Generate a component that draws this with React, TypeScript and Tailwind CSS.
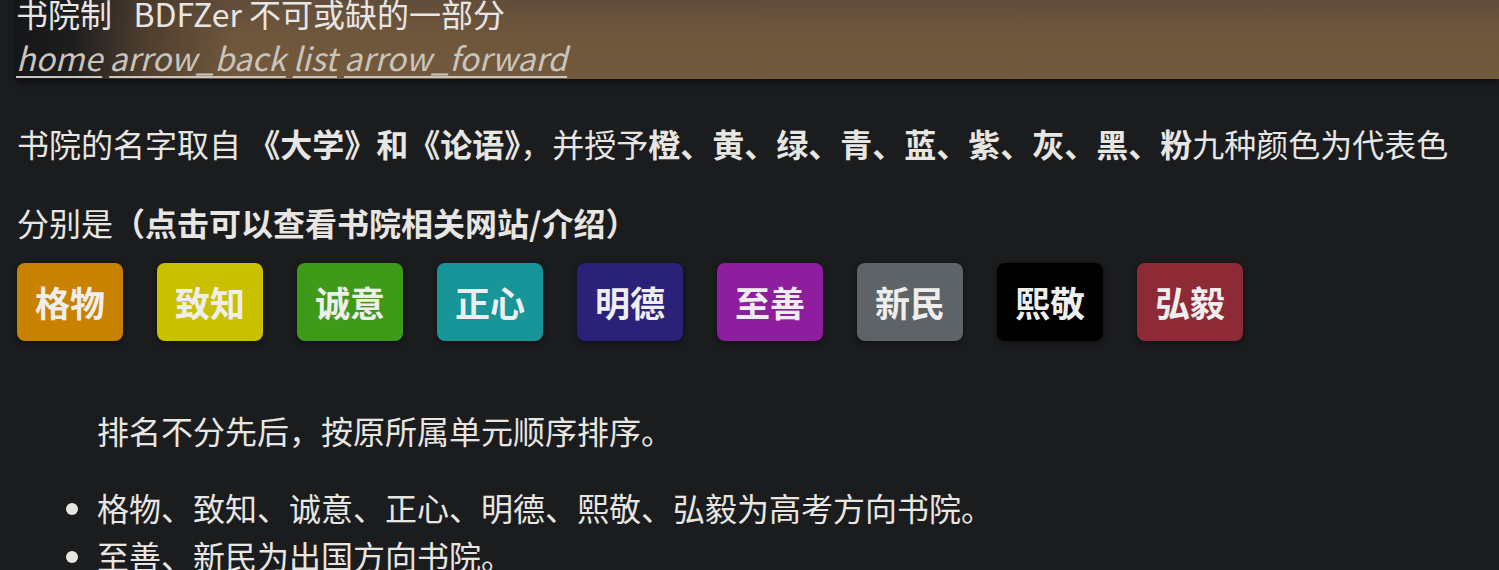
import type { ReactNode } from 'react';

// ---------------------------------------------------------------------------
// Data
// ---------------------------------------------------------------------------
const COLLEGES: { name: string; cls: string }[] = [
  { name: '格物', cls: 'bg-[#c98200]' },
  { name: '致知', cls: 'bg-[#c9c000]' },
  { name: '诚意', cls: 'bg-[#3f9a1a]' },
  { name: '正心', cls: 'bg-[#189598]' },
  { name: '明德', cls: 'bg-[#2a2279]' },
  { name: '至善', cls: 'bg-[#8e1e9e]' },
  { name: '新民', cls: 'bg-[#5d6366]' },
  { name: '熙敬', cls: 'bg-[#000000]' },
  { name: '弘毅', cls: 'bg-[#8e2a36]' },
];

const NAV_LINKS = ['home', 'arrow_back', 'list', 'arrow_forward'];

// ---------------------------------------------------------------------------
// Pieces
// ---------------------------------------------------------------------------
function Bold({ children }: { children: ReactNode }) {
  return <strong className="font-bold">{children}</strong>;
}

function Header() {
  return (
    <header className="relative ml-4 -mt-[9px] h-[88px] overflow-hidden shadow-[0_3px_6px_rgba(0,0,0,0.55)] bg-[linear-gradient(180deg,#5c4a3b_0%,#6d553c_40%,#735a3d_100%)]">
      {/* dark fade on the left edge of the banner */}
      <div className="absolute inset-y-0 left-0 w-[220px] bg-[linear-gradient(90deg,#151618_0%,#1d1d1e_25%,rgba(60,48,38,0.6)_60%,rgba(115,90,61,0)_100%)]" />
      <div className="relative flex flex-col">
        <div className="h-[44px] leading-[44px] whitespace-pre">书院制   BDFZer 不可或缺的一部分</div>
        <nav className="h-[44px] leading-[44px] flex gap-[7px] italic text-[#c9c4bc]">
          {NAV_LINKS.map((l) => (
            <a
              key={l}
              href="#"
              className="underline decoration-2 underline-offset-[5px] decoration-[#c9c4bc]"
            >
              {l}
            </a>
          ))}
        </nav>
      </div>
    </header>
  );
}

// ---------------------------------------------------------------------------
// Page
// ---------------------------------------------------------------------------
export default function App() {
  return (
    <div
      className="min-h-[570px] overflow-hidden bg-[#1b1c1e] text-[#e8e6e3] text-[32px]"
      style={{ fontFamily: '"Noto Sans CJK SC", "Noto Sans", sans-serif' }}
    >
      <Header />

      <main className="pl-[17px]">
        <p className="mt-[41px] leading-[47px] whitespace-nowrap">
          书院的名字取自 <Bold>《大学》和《论语》</Bold>，并授予
          <Bold>橙、黄、绿、青、蓝、紫、灰、黑、粉</Bold>九种颜色为代表色
        </p>

        <p className="mt-[32px] leading-[47px]">
          分别是<Bold>（点击可以查看书院相关网站/介绍）</Bold>
        </p>

        <div className="mt-[17px] flex gap-[34px]">
          {COLLEGES.map((c) => (
            <a
              key={c.name}
              href="#"
              className={`${c.cls} w-[106px] h-[78px] rounded-[8px] flex items-center justify-center font-bold text-[35px] text-[#eeeeee] shadow-[0_2px_6px_rgba(0,0,0,0.45)]`}
            >
              {c.name}
            </a>
          ))}
        </div>

        <blockquote className="mt-[66px] ml-[80px] leading-[47px]">
          排名不分先后，按原所属单元顺序排序。
        </blockquote>

        <ul className="mt-[29px] pl-[80px] list-disc marker:text-[#e8e6e3]">
          <li className="leading-[48px]">格物、致知、诚意、正心、明德、熙敬、弘毅为高考方向书院。</li>
          <li className="leading-[48px]">至善、新民为出国方向书院。</li>
        </ul>
      </main>
    </div>
  );
}
